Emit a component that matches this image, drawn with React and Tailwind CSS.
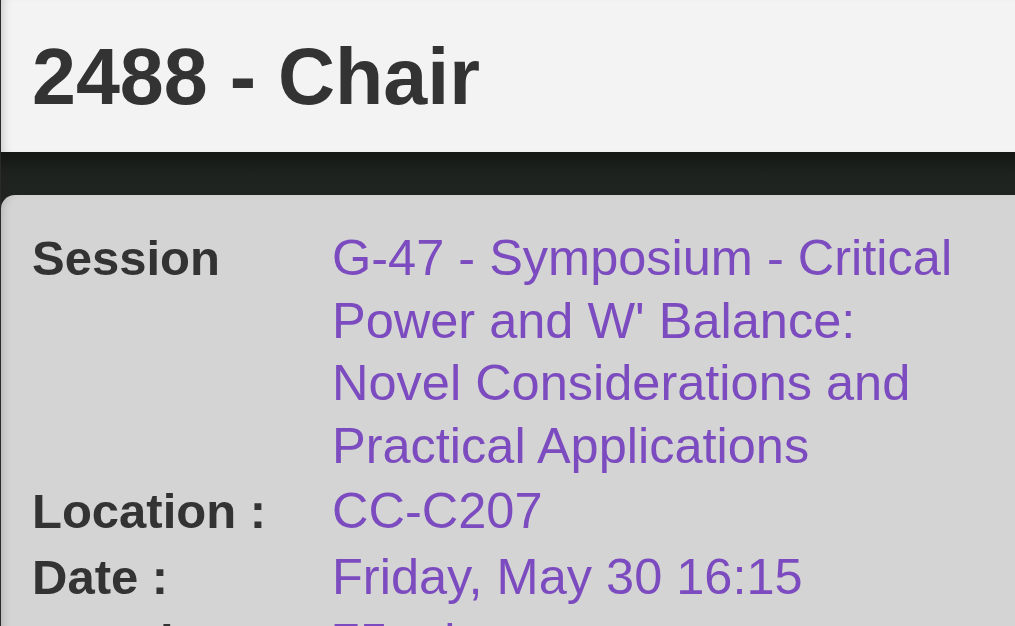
import React from "react";

const rows = [
    {
        label: "Session",
        lines: ["G-47 - Symposium - Critical", "Power and W' Balance:", "Novel Considerations and", "Practical Applications"],
    },
    { label: "Location :", lines: ["CC-C207"] },
    { label: "Date :", lines: ["Friday, May 30 16:15"] },
    { label: "Duration :", lines: ["75 minutes"] },
];

export default function App() {
    return (
        <div
            className="w-[1015px] h-[626px] overflow-hidden flex flex-col bg-[#1f2421] border-l border-[#2b2b2b]"
            style={{ fontFamily: '"Liberation Sans", Arial, sans-serif' }}
        >
            {/* header */}
            <div className="h-[152px] shrink-0 bg-[#f3f3f3] flex items-center pl-[31px] shadow-[inset_8px_0_8px_-6px_rgba(0,0,0,0.18)]">
                <h1 className="text-[79px] font-bold text-[#333333] leading-none">2488 - Chair</h1>
            </div>

            {/* dark band */}
            <div className="h-[43px] shrink-0 bg-gradient-to-b from-[#141714] via-[#1d221f] to-[#1f2421]" />

            {/* card */}
            <div className="flex-1 bg-[#d4d4d4] rounded-tl-[14px] pt-[32px] pl-[31px] flex flex-col gap-[3px] shadow-[inset_8px_0_8px_-6px_rgba(0,0,0,0.15)]">
                {rows.map((row, idx) => (
                    <div key={idx} className="grid grid-cols-[300px_1fr] leading-[62.5px]">
                        <div className="text-[49px] font-bold text-[#333333]">{row.label}</div>
                        <div className="text-[50.5px] text-[#7b4bbf]">
                            {row.lines.map((line, i) => (
                                <span key={i} className="block whitespace-nowrap">{line}</span>
                            ))}
                        </div>
                    </div>
                ))}
            </div>
        </div>
    );
}
